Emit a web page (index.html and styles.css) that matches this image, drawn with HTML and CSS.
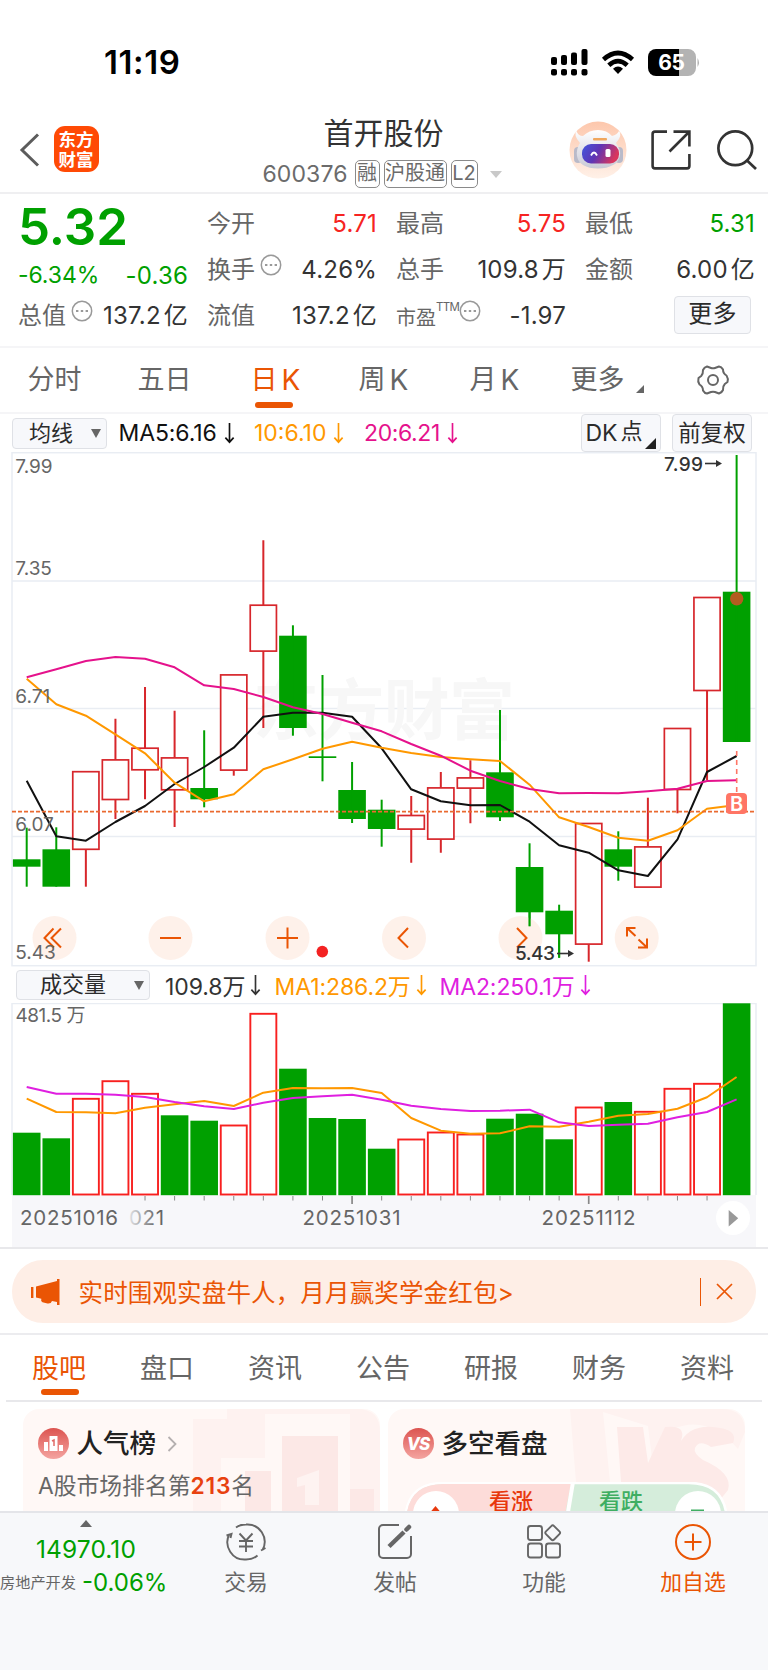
FILE: index.html
```html
<!DOCTYPE html>
<html lang="zh-CN">
<head>
<meta charset="utf-8">
<title>首开股份 600376</title>
<link rel="stylesheet" href="styles.css">
</head>
<body>
<div class="phone">
  <header class="status">
    <span class="clock">11:19</span>
    <svg class="status-icons" width="150" height="28" viewBox="551 49 150 28">
      <g fill="#000">
        <rect x="551" y="57" width="6" height="8" rx="2"/><rect x="561" y="55" width="6" height="10" rx="2"/><rect x="571" y="52.500" width="6" height="12.500" rx="2"/><rect x="581.500" y="49" width="6" height="16" rx="2"/>
        <rect x="551" y="69" width="6" height="6.500" rx="2"/><rect x="561" y="69" width="6" height="6.500" rx="2"/><rect x="571" y="69" width="6" height="6.500" rx="2"/><rect x="581.500" y="69" width="6" height="6.500" rx="2"/>
      </g>
      <g fill="none" stroke="#000" stroke-width="4.600"><path d="M603.500 59.500Q618 46.500 632.500 59.500"/><path d="M608.800 65.300Q618 57 627.200 65.300"/></g>
      <path d="M613 68.700Q618 64.500 623 68.700L618 74Z"/>
      <path d="M656 49h23v27h-23a8 8 0 0 1-8-8V57a8 8 0 0 1 8-8z"/>
      <path fill="#b3b3b3" d="M679 49h9a8 8 0 0 1 8 8v11a8 8 0 0 1-8 8h-9zM697.500 58q3 4.500 0 9z"/>
      <text class="battery" x="671.500" y="70" text-anchor="middle">65</text>
    </svg>
  </header>

  <nav class="topbar">
    <svg class="back" width="22" height="36" viewBox="0 0 22 36"><path d="M19 2.500L3 18l16 15.500" fill="none" stroke="#5c5c5c" stroke-width="3"/></svg>
    <div class="logo"><span>东方</span><span>财富</span></div>
    <div class="title">
      <h1>首开股份</h1>
      <div class="code"><span class="num">600376</span><i class="tag">融</i><i class="tag w3">沪股通</i><i class="tag l2">L2</i><b class="caret"></b></div>
    </div>
    <svg class="robot" width="58" height="58" viewBox="0 0 58 58">
      <defs><linearGradient id="rb" x1="0" y1="0" x2="0" y2="1"><stop offset="0" stop-color="#fdc7ac"/><stop offset="1" stop-color="#fff1e8"/></linearGradient>
      <linearGradient id="rv" x1="0" y1="0" x2="1" y2=".3"><stop offset="0" stop-color="#4257dd"/><stop offset=".5" stop-color="#5f35b4"/><stop offset="1" stop-color="#d8365e"/></linearGradient>
      <linearGradient id="rh" x1="0" y1="0" x2="0" y2="1"><stop offset="0" stop-color="#fff"/><stop offset="1" stop-color="#c9cad6"/></linearGradient></defs>
      <circle cx="29" cy="29" r="28.500" fill="url(#rb)"/>
      <rect x="5" y="26" width="8" height="16" rx="4" fill="#b9bac9"/><rect x="46" y="26" width="8" height="16" rx="4" fill="#b9bac9"/>
      <path d="M11 22Q4 14 7.500 10Q9 15 14 15Q20 9 29 9Q38 9 43 15Q48 14 50 10Q54 14 47 22Q52 29 51 35Q49 42 44 44Q38 47.500 29 47.500Q20 47.500 14 44Q9 41 8 35Q7 28 11 22Z" fill="url(#rh)"/>
      <rect x="24" y="17" width="14" height="2.600" rx="1" fill="#f0a75e"/>
      <rect x="13" y="23" width="37" height="19.500" rx="9" fill="url(#rv)"/>
      <path d="M22 34.500q3-6 6 0" stroke="#fff" stroke-width="1.800" fill="none"/><rect x="36.500" y="28" width="5" height="8" rx="1.500" fill="#fff"/>
    </svg>
    <svg class="share" width="40" height="40" viewBox="0 0 40 40" fill="none" stroke="#333" stroke-width="2.600"><path d="M16 1.600H4a2.400 2.400 0 0 0-2.400 2.400v32A2.400 2.400 0 0 0 4 38.400h32a2.400 2.400 0 0 0 2.400-2.400V24"/><path d="M22.500 1.600H38.400V16.500M38 2L18.500 21.500"/></svg>
    <svg class="search" width="41" height="41" viewBox="0 0 41 41" fill="none" stroke="#333" stroke-width="2.700"><circle cx="18.300" cy="18.300" r="16.900"/><path d="M29.500 30l9.500 9"/></svg>
  </nav>

  <section class="quote">
    <div class="col first">
      <div class="price">5.32</div>
      <div class="row change"><span class="pct">-6.34%</span><span class="g">-0.36</span></div>
      <div class="row"><span class="lab">总值<svg class="dots" width="22" height="22" viewBox="0 0 22 22"><circle cx="11" cy="11" r="9.700"/><path d="M5 11h2.400m2.400 0h2.400m2.400 0H17"/></svg></span><span>137.2<em>亿</em></span></div>
    </div>
    <div class="col">
      <div class="row"><span class="lab">今开</span><span class="r">5.71</span></div>
      <div class="row"><span class="lab">换手<svg class="dots" width="22" height="22" viewBox="0 0 22 22"><circle cx="11" cy="11" r="9.700"/><path d="M5 11h2.400m2.400 0h2.400m2.400 0H17"/></svg></span><span>4.26%</span></div>
      <div class="row"><span class="lab">流值</span><span>137.2<em>亿</em></span></div>
    </div>
    <div class="col">
      <div class="row"><span class="lab">最高</span><span class="r">5.75</span></div>
      <div class="row"><span class="lab">总手</span><span>109.8<em>万</em></span></div>
      <div class="row pe"><span class="lab small">市盈<sup>TTM</sup><svg class="dots" width="22" height="22" viewBox="0 0 22 22"><circle cx="11" cy="11" r="9.700"/><path d="M5 11h2.400m2.400 0h2.400m2.400 0H17"/></svg></span><span>-1.97</span></div>
    </div>
    <div class="col">
      <div class="row"><span class="lab">最低</span><span class="g">5.31</span></div>
      <div class="row"><span class="lab">金额</span><span>6.00<em>亿</em></span></div>
      <div class="row end"><span class="btn more">更多</span></div>
    </div>
  </section>

  <nav class="periods">
    <span>分时</span><span>五日</span><span class="on">日<i>K</i></span><span>周<i>K</i></span><span>月<i>K</i></span><span>更多<b class="corner"></b></span>
    <svg width="34" height="34" viewBox="-17 -17 34 34" fill="none" stroke="#666" stroke-width="2"><path stroke-linejoin="round" d="M-6-13.500L-2-12Q0-11.300 2-12L6-13.500Q8.500-13.300 10-10.500Q10-6.500 13.500-4.500Q15.500-1.500 14.500 2L11.800 4Q9.800 6 10 10Q8.800 12.700 6 13.500L2 12Q0 11.300-2 12L-6 13.500Q-8.500 13.300-10 10.500Q-10 6.500-13.500 4.500Q-15.500 1.500-14.500-2L-11.800-4Q-9.800-6-10-10Q-8.800-12.700-6-13.500Z"/><circle r="5"/></svg>
  </nav>

  <div class="mabar">
    <span class="btn sel">均线<b class="down"></b></span>
    <span class="ma m5">MA5:6.16<svg class="arr" viewBox="0 0 12 24"><path d="M6 1v21M1.500 17L6 22l4.500-5"/></svg></span>
    <span class="ma m10">10:6.10<svg class="arr" viewBox="0 0 12 24"><path d="M6 1v21M1.500 17L6 22l4.500-5"/></svg></span>
    <span class="ma m20">20:6.21<svg class="arr" viewBox="0 0 12 24"><path d="M6 1v21M1.500 17L6 22l4.500-5"/></svg></span>
    <span class="btn dk">DK<em>点</em><b class="corner"></b></span>
    <span class="btn adj">前复权</span>
  </div>

  <svg class="kline" id="kline" width="768" height="515" viewBox="0 452 768 515"></svg>

  <div class="volbar">
    <span class="btn sel vol">成交量<b class="down"></b></span>
    <span class="ma v0">109.8万<svg class="arr" viewBox="0 0 12 24"><path d="M6 1v21M1.500 17L6 22l4.500-5"/></svg></span>
    <span class="ma v1">MA1:286.2万<svg class="arr" viewBox="0 0 12 24"><path d="M6 1v21M1.500 17L6 22l4.500-5"/></svg></span>
    <span class="ma v2">MA2:250.1万<svg class="arr" viewBox="0 0 12 24"><path d="M6 1v21M1.500 17L6 22l4.500-5"/></svg></span>
  </div>

  <svg class="volume" id="volume" width="768" height="246" viewBox="0 1003 768 246"></svg>

  <section class="promo">
    <div class="banner">
      <svg width="29" height="26" viewBox="0 0 29 26" fill="#ea5504"><rect x="0" y="8" width="2.400" height="11"/><path d="M5 7.500L26 2V0h2.500v26H26v-3l-5-1q-1 3-4.500 2.500l-5-1.300q-2-1-1.200-3.500L5 18.500z"/></svg>
      <span class="msg">实时围观实盘牛人，月月赢奖学金红包&gt;</span>
      <i class="bar"></i>
      <svg width="17" height="17" viewBox="0 0 17 17"><path d="M1 1l15 15M16 1L1 16" stroke="#ea5504" stroke-width="1.700"/></svg>
    </div>
  </section>

  <nav class="tabs"><span class="on">股吧</span><span>盘口</span><span>资讯</span><span>公告</span><span>研报</span><span>财务</span><span>资料</span></nav>

  <section class="cards">
    <article class="card">
      <svg class="deco" width="357" height="102" viewBox="0 0 357 102"><path fill="#fef2f0" d="M170 10h34V0h130q23 0 23 23v79h-30V80V5h-85v44h-44v53h-28z"/><path fill="#fce8e6" d="M222 62h26v40h-26zM259 27h56v75h-56zM327 80h24v22h-24z"/><path fill="#fef3f1" d="M274 69l22-8v35h-14V76l-8 2z"/></svg>
      <div class="head">
        <svg width="31" height="31" viewBox="0 0 31 31"><defs><linearGradient id="ic" x1="0" y1="0" x2="0" y2="1"><stop stop-color="#dc5450"/><stop offset="1" stop-color="#f4a4a0"/></linearGradient></defs><circle cx="15.500" cy="15.500" r="15.500" fill="url(#ic)"/><path fill="#fff" d="M6 14h4v9H6zM11.500 8h8v15h-8zM21 17h4v6h-4z"/><path d="M14 13l2-1v6" fill="none" stroke="#e06a66" stroke-width="1.500"/></svg>
        <h2>人气榜</h2>
        <svg class="chev" width="10" height="16" viewBox="0 0 10 16"><path d="M1.500 1L8.500 8l-7 7" fill="none" stroke="#b5b0b0" stroke-width="1.800"/></svg>
      </div>
      <p class="rank">A股市场排名第<b>213</b>名</p>
    </article>
    <article class="card">
      <svg class="deco" width="357" height="102" viewBox="0 0 357 102"><path fill="#fef2f0" d="M182 0h152q23 0 23 23L350 40Q320 5 285 20L265 58 260 17 215 3 222 73H188z"/><path fill="#fdeae8" d="M229 18h26l5 36 17-36q25-3 14 18Q300 16 325 18q26 2 20 16l-22 4q-12-8-16 1-2 5 8 12 30 13 25 30L328 96Q325 80 308 73H233z"/></svg>
      <div class="head">
        <svg width="31" height="31" viewBox="0 0 31 31"><circle cx="15.500" cy="15.500" r="15.500" fill="url(#ic)"/><text class="vs" x="15" y="22" text-anchor="middle">VS</text></svg>
        <h2>多空看盘</h2>
      </div>
      <svg class="vote" width="326" height="36" viewBox="404 1482 326 36">
        <path d="M405 1524q0-41 38-41h246q38 0 38 41z" fill="#d5eddb" stroke="#fff" stroke-width="2.500"/>
        <path d="M406 1524q0-40 37-40h128l-8 40z" fill="#fddcd9"/><path d="M573 1482l-6 36" stroke="#fff" stroke-width="4"/>
        <circle cx="436" cy="1514" r="23" fill="#fff"/><circle cx="698" cy="1514" r="23" fill="#fff"/>
        <path d="M435.500 1506l5 6h-10z" fill="#e8380d"/><rect x="691" y="1509.500" width="13" height="3" fill="#3fae62"/>
        <text class="votetxt" x="489" y="1508.500" fill="#e8380d">看涨</text><text class="votetxt" x="599" y="1508.500" fill="#3fae62">看跌</text>
      </svg>
    </article>
  </section>

  <footer class="dock">
    <div class="index"><b class="up"></b><span class="pt">14970.10</span><span class="sec"><small>房地产开发</small>-0.06%</span></div>
    <div class="item"><svg width="42" height="38" viewBox="0 0 42 38" fill="none" stroke="#666" stroke-width="1.900"><path d="M11 4.500Q15 1.500 21 1.500A17.300 17.300 0 0 1 37.500 27M1.500 12.500l5-1.500-1 4M32.500 32.500Q28 36.500 21 36.500A17.300 17.300 0 0 1 4.500 11M36 27.500l4.500-2.500"/><path d="M14.500 10.500l6.500 7 6.500-7M21 17.500V29M14 18h14M14 23.500h14"/></svg><span>交易</span></div>
    <div class="item"><svg width="36" height="38" viewBox="0 0 36 38" fill="none" stroke="#666" stroke-width="2"><path d="M22 2H6a4 4 0 0 0-4 4v25a4 4 0 0 0 4 4h24a4 4 0 0 0 4-4V13"/><path d="M12 23.500L27 9" stroke-width="4.500"/><path d="M29.500 6.500l2.500-2.500" stroke-width="4.500" stroke-linecap="round"/></svg><span>发帖</span></div>
    <div class="item"><svg width="36" height="38" viewBox="0 0 36 38" fill="none" stroke="#666" stroke-width="1.900"><rect x="2" y="3" width="14" height="14" rx="2.500"/><rect x="2" y="20.500" width="14" height="14" rx="2.500"/><rect x="20" y="20.500" width="14" height="14" rx="2.500"/><rect x="21" y="4" width="11.500" height="11.500" rx="2" transform="rotate(45 26.700 9.700)"/></svg><span>功能</span></div>
    <div class="item add"><svg width="38" height="38" viewBox="0 0 38 38" fill="none" stroke="#ea5504" stroke-width="2"><circle cx="19" cy="19" r="17"/><path d="M19 10.500v17M10.500 19h17"/></svg><span>加自选</span></div>
  </footer>
</div>
<script src="chart.js"></script>
</body>
</html>
```

FILE: styles.css
```css
* { box-sizing: border-box; margin: 0; padding: 0; }
body { width: 768px; background: #fff; font-family: Inter, "Noto Sans CJK SC", sans-serif; color: #333; }
i, em { font-style: normal; }
svg { display: block; flex: none; }
.phone { width: 768px; height: 1670px; overflow: hidden; display: flex; flex-direction: column; }
.phone > * { flex: none; }

.status { height: 110px; display: flex; justify-content: space-between; align-items: flex-start; padding: 49px 67px 0 104px; }
.clock { font-size: 33px; line-height: 27px; font-weight: 600; color: #000; letter-spacing: .6px; }
.battery { font-size: 21px; font-weight: 700; fill: #fff; letter-spacing: -.3px; }

.topbar { height: 84px; border-bottom: 2px solid #efeff1; display: flex; align-items: flex-start; padding: 9px 10px 0 19px; }
.back { margin-top: 13px; }
.logo { width: 46px; height: 46px; margin: 7px 0 0 12.500px; border-radius: 11px; background: #ff4a05; color: #fff; font-size: 17.500px; font-weight: 600; line-height: 19.500px; text-align: center; padding-top: 4px; }
.logo span { display: block; }
.title { width: 300px; margin-left: 134.500px; text-align: center; }
h1 { font-size: 30px; line-height: 32px; font-weight: 400; width: 300px; margin: -2px 0 0 .5px; }
.code { display: flex; align-items: center; height: 28px; margin-top: 11px; margin-left: 29.500px; color: #6b6b6b; }
.num { font-size: 23px; width: 92px; text-align: left; letter-spacing: .1px; }
.tag { height: 28px; width: 25px; border: 1.500px solid #8a8a8a; border-radius: 5px; font-size: 20px; line-height: 25px; text-align: center; margin-right: 4px; display: flex; justify-content: center; }
.w3 { width: 63px; }
.l2 { width: 27px; }
.caret { border: 6.500px solid transparent; border-top: 7px solid #c9c9c9; border-bottom: 0; margin-left: 8px; }
.robot { margin: 2px 0 0 36px; }
.share { margin: 11px 0 0 24px; }
.search { margin: 11px 0 0 26px; }

.quote { height: 154px; border-bottom: 2px solid #f5f5f7; display: grid; grid-template-columns: repeat(4, 170px); column-gap: 19px; padding: 7px 0 0 18px; }
.row { height: 46px; display: flex; justify-content: space-between; align-items: center; font-size: 24px; line-height: 46px; white-space: nowrap; letter-spacing: .2px; }
.row em { margin-left: 3px; font-size: 24px; }
.lab { color: #666; display: flex; align-items: center; font-size: 24px; letter-spacing: 0; }
.dots { margin: -11px 0 0 5px; fill: none; stroke: #999; stroke-width: 1.500; }
.dots path { stroke-width: 2.200; }
.small { font-size: 20px; padding-top: 4px; }
sup { font-size: 11.500px; line-height: 12px; margin-top: -22px; letter-spacing: -.7px; }
.small .dots { margin: -14px 0 0 0; }
.price { height: 52px; font-size: 51px; line-height: 52px; font-weight: 600; color: #00a000; letter-spacing: 0; }
.change { height: 40px; color: #00a000; }
.change .g { margin-top: 6px; }
.pct { font-size: 23px; margin-top: 4px; letter-spacing: -.1px; }
.r { color: #f62422; } .g { color: #00a000; }
.end { justify-content: flex-end; padding-right: 4px; }
.btn { background: #f7f8fb; border: 1.500px solid #dfe1e6; border-radius: 4px; color: #2b2b2b; display: flex; align-items: center; justify-content: center; position: relative; }
.more { width: 77px; height: 38px; font-size: 24px; line-height: 32px; padding-bottom: 3px; margin-bottom: 2px; }

.periods { height: 66px; border-bottom: 2px solid #f5f5f7; display: grid; grid-template-columns: 110px 113px 108px 111px 101px 125px 34px; align-items: center; justify-items: start; padding-left: 27.500px; font-size: 27px; color: #666; }
.periods span { position: relative; display: flex; align-items: center; line-height: 64px; }
.periods i { margin-left: 4px; font-size: 28px; }
.periods .on, .tabs .on { color: #ea5504; }
.on::after { content: ""; position: absolute; height: 6px; width: 38px; border-radius: 3px; background: #ea5504; left: 50%; margin-left: -20px; bottom: 4px; }
.corner { border-left: 8px solid transparent; border-bottom: 8px solid #666; margin: 18px 0 0 11px; }

.mabar { height: 38px; display: flex; align-items: center; padding-left: 12px; }
.sel { width: 95px; height: 31px; font-size: 22px; line-height: 26px; justify-content: flex-start; padding: 0 0 1px 16px; }
.down { border: 5px solid transparent; border-top: 9px solid #666; border-bottom: 0; position: absolute; right: 5px; top: 10px; }
.ma { font-size: 23px; display: flex; align-items: center; white-space: nowrap; }
.arr { width: 11px; height: 22px; margin-left: 7px; fill: none; stroke: currentColor; stroke-width: 1.800; }
.m5 { color: #111; width: 135.500px; margin-left: 11.500px; letter-spacing: -.1px; }
.m10 { color: #ff9800; width: 110px; letter-spacing: 0; }
.m20 { color: #e5128c; width: 216.500px; letter-spacing: -.4px; }
.dk { width: 80px; height: 38px; font-size: 23px; justify-content: flex-start; padding-left: 4px; }
.dk em { font-size: 22px; line-height: 28px; margin: -4px 0 0 3px; }
.dk .corner { border-left-width: 11px; border-bottom: 11px solid #222; position: absolute; right: 4px; bottom: 2px; margin: 0; }
.adj { width: 80px; height: 38px; margin-left: 11.500px; font-size: 22.500px; line-height: 32px; padding: 0 0 1px 0; }

.volbar { height: 36px; display: flex; align-items: center; padding: 0 0 1px 16px; }
.vol { width: 134px; height: 30px; padding-left: 23px; }
.v0 { margin-left: 15px; width: 109.500px; } .v1 { color: #ff9800; width: 165px; } .v2 { color: #df1fe0; }
.volbar .ma { letter-spacing: -.1px; }
.volbar .arr { margin-left: 5px; }

.grid { stroke: #e9edf3; stroke-width: 1.500; fill: none; }
.mark { font-size: 66px; font-weight: 700; fill: #f7f7f7; }
.ylab { font-size: 19px; fill: #666; }
.peak { font-size: 19px; font-weight: 500; fill: #333; }
.date { font-size: 20.500px; fill: #666; }

.promo { border-top: 2px solid #e8e8eb; border-bottom: 2px solid #ececef; height: 88px; padding: 11px 12px 0; margin-top: -2px; }
.banner { height: 63px; border-radius: 31px; background: #feeee6; display: flex; align-items: center; padding: 0 23px 0 19px; color: #ea5504; }
.msg { font-size: 24.500px; letter-spacing: .15px; margin-left: 18.500px; padding-bottom: 1px; flex: 1; white-space: nowrap; }
.bar { width: 1.500px; height: 28px; background: #ea5504; margin-right: 15px; }

.tabs { height: 67px; margin: 0 6px; border-bottom: 2px solid #e8e8eb; display: flex; justify-content: space-between; padding: 0 28px 0 26px; font-size: 27px; line-height: 68px; color: #666; }
.tabs span { position: relative; }
.tabs .on::after { bottom: 5px; margin-left: -18px; }

.cards { height: 109px; display: flex; gap: 8px; padding: 7px 0 0 23px; overflow: hidden; }
.card { width: 357px; height: 130px; border-radius: 16px 16px 0 0; background: #fff8f6; position: relative; overflow: hidden; }
.deco { position: absolute; left: 0; top: 0; }
.head { display: flex; align-items: center; height: 69px; padding-left: 15px; position: relative; }
h2 { font-size: 26.500px; font-weight: 500; color: #222; margin-left: 7.500px; line-height: 69px; }
.chev { margin-left: 11px; }
.rank { position: relative; font-size: 22.800px; line-height: 22px; color: #666; padding-left: 15px; margin-top: -3px; white-space: nowrap; }
.rank b { color: #e8410f; font-weight: 600; letter-spacing: .8px; }
.vs { font-size: 17px; font-weight: 800; font-style: italic; fill: #fff; letter-spacing: -1px; }
.vote { position: absolute; left: 16px; top: 73px; }
.votetxt { font-size: 22px; font-weight: 500; }

.dock { height: 160px; border-top: 2px solid #e4e5e9; background: #f7f8fa; display: grid; grid-template-columns: 172px 148px 150px 148px 150px; color: #666; }
.index { color: #00a000; display: flex; flex-direction: column; align-items: center; font-size: 24.500px; }
.up { border: 6.500px solid transparent; border-bottom: 7px solid #666; border-top: 0; margin-top: 7px; }
.pt { line-height: 28px; margin-top: 8px; letter-spacing: .1px; }
.sec { display: flex; align-items: center; line-height: 30px; margin-top: 5px; white-space: nowrap; align-self: flex-start; font-size: 24px; }
.sec small { font-size: 15.200px; color: #666; margin-right: 6px; }
.item { display: flex; flex-direction: column; align-items: center; padding-top: 10px; font-size: 21.800px; }
.item span { line-height: 30px; margin-top: 6px; }
.add { color: #ea5504; }
```

FILE: chart.js
```js
const xs = i => 26.7 + 29.58 * i;
const line = (ys, color) => `<polyline fill="none" stroke="${color}" stroke-width="2" stroke-linejoin="round" points="${ys.map((y, i) => xs(i).toFixed(1) + ',' + y).join(' ')}"/>`;
const UP = '#d7262b', DOWN = '#00a000';

// direction, body top, body bottom, high, low
const candles = [
  ['g',859.3,866.7,827.7,886.7],['g',849.3,886.7,827.3,886.7],['r',771.5,849.5,771.5,886.7],['r',759.7,799.7,718.7,819],
  ['r',748,770,687,799.3],['r',757.7,790,710.7,827],['g',788,799.3,730.3,807.3],['r',674.7,770.3,674.7,775.7],
  ['r',605,651.3,540.3,728],['g',635.7,728,625.3,735.7],['g',756.3,758,675,781.3],['g',790,819,762,823],
  ['g',809.7,829,799.7,846.7],['r',815.3,829.3,796,862.7],['r',787.7,839.3,772,852.7],['r',777.7,788.3,760.3,823.3],
  ['g',772.3,817.3,710,821],['g',867,912.3,843.3,926.3],['g',910.7,934.3,904.7,957.7],['r',823.3,944.3,823.3,961.7],
  ['g',849.3,866.7,831.3,880.7],['r',846.7,887.3,797.7,887.3],['r',728.3,789.7,728.3,813.3],['r',597.3,690.7,597.3,780],
  ['g',591.7,742,455,742]
];
const ma5 = [780.7,836.3,840.7,822,806,784,767,747.7,716.7,712.7,712.7,716.7,748.3,789.3,801.3,805.3,805,821.7,845.3,852.7,870.3,876,839.3,772,756];
const ma10 = [678.7,704.3,715.7,734.3,753.3,782.7,801.3,794.3,769.3,759.3,748.7,741.7,747.7,753,757,759.3,761,784.7,817.3,827,837.7,840.7,830.3,808.7,805];
const ma20 = [677.3,669.3,661,657,658.7,667.3,685.3,689,697,707.3,714,722.7,731.3,744,755.7,770.7,781,789,793.3,793,793.3,791.3,788.7,781,780.3];

let k = `<rect class="grid" x="12" y="452.7" width="744" height="513"/><path class="grid" d="M12 581H756M12 708.5H756M12 836.5H756"/>
<text class="mark" x="253" y="734" textLength="262">东方财富</text>`;
candles.forEach(([d, t, b, h, l], i) => {
  const x = xs(i);
  if (d === 'g') k += `<rect x="${x - 13.8}" y="${t}" width="27.6" height="${b - t}" fill="${DOWN}"/><path d="M${x} ${h}V${l}" stroke="${DOWN}" stroke-width="2"/>`;
  else k += `<rect x="${x - 13.1}" y="${t + .2}" width="26.2" height="${b - t - .4}" fill="#fff" stroke="${UP}" stroke-width="1.7"/><path d="M${x} ${h}V${t}M${x} ${b}V${l}" stroke="${UP}" stroke-width="2"/>`;
});
k += line(ma5, '#111') + line(ma10, '#ff9800') + line(ma20, '#e5128c');
k += `<path d="M12 811.7H756" stroke="#ea6a30" stroke-width="1.8" stroke-dasharray="4 2"/>
<circle cx="736.7" cy="598.7" r="6.7" fill="#b35c20"/>
<path d="M736.7 751V793" stroke="#ff7565" stroke-width="1.6" stroke-dasharray="5 4"/>
<rect x="726" y="793" width="21" height="21" rx="4" fill="#ff7565"/>
<text x="736.7" y="810.5" text-anchor="middle" font-size="20" font-weight="600" fill="#fff">B</text>
<circle cx="322.3" cy="951.6" r="5.8" fill="#f32222"/>`;
const icons = [
  [54.5, 'M53.5 928.5L44.500 938l9.500 9.500M61 928.500L51.500 938l9.500 9.500'], [170.500, 'M160 938h21'], [287.500, 'M277 938h21M287.500 927.500v21'],
  [404, 'M408 928L398.500 938l9.500 9.500'], [520.500, 'M517 928l9.500 10-9.500 9.500'],
  [636.700, 'M635.500 928h-8.500v8.500M627.500 928.500l8 7.500M638 947.500h9v-9M646.500 947l-8-7.500']
];
icons.forEach(([cx, d]) => k += `<circle cx="${cx}" cy="938" r="22" fill="#fde7dc" fill-opacity=".6"/><path d="${d}" fill="none" stroke="#ea5504" stroke-width="2"/>`);
[['7.99',473],['7.35',575],['6.71',702.5],['6.07',831],['5.43',959]].forEach(([t, y]) => k += `<text class="ylab" x="15.3" y="${y}">${t}</text>`);
// wicks that reach below the round buttons' top edge stay in front of them
k += `<path d="M${xs(17)} 912V926.300M${xs(18)} 934V957.700" stroke="${DOWN}" stroke-width="2"/>`;
k += `<text class="peak" x="664" y="470.5" textLength="39">7.99</text><path d="M705 463.500h11" stroke="#333" stroke-width="1.6"/><path d="M716 460l6 3.500-6 3.500z" fill="#333"/>
<text class="peak" x="515" y="960" textLength="40">5.43</text><path d="M557 953.500h11" stroke="#333" stroke-width="1.6"/><path d="M568 950l6 3.500-6 3.500z" fill="#333"/>`;
document.getElementById('kline').innerHTML = k;

const dirs = 'ggrrrggrrggggrrrgggrgrrrg';
const tops = [1132.7,1138.3,1098.3,1080.7,1093.3,1115.3,1120.7,1125,1013.3,1068.7,1118,1119,1148.7,1139,1132,1134,1118.7,1113.7,1139.3,1107,1102,1111.3,1088.3,1083.3,1003.3];
const v1 = [1098.7,1112,1112.3,1113.3,1107.7,1104.3,1101,1106,1092.7,1088,1088.3,1088,1093,1118,1130.7,1133.7,1133.3,1126.3,1126.7,1121.7,1115.7,1114,1108.7,1097.3,1077];
const v2 = [1087,1093.7,1093.7,1094.7,1097,1102,1106.3,1109,1102.7,1098,1096.3,1094.7,1099.7,1105.7,1109,1111,1110.7,1109.7,1122.3,1126,1124.7,1123.7,1117.3,1112,1099.3];
let v = `<defs><linearGradient id="fade"><stop stop-color="#666" stop-opacity=".15"/><stop offset=".8" stop-color="#666"/></linearGradient></defs>
<rect x="12" y="1195" width="744" height="54" fill="#f7f7fa"/><path class="grid" d="M12 1195V1003.5H756V1195"/><text class="ylab" x="15.500" y="1022.3" textLength="70">481.5 万</text>`;
tops.forEach((t, i) => {
  const x = xs(i);
  v += dirs[i] === 'g' ? `<rect x="${x - 13.8}" y="${t}" width="27.6" height="${1195.200 - t}" fill="${DOWN}"/>`
    : `<rect x="${x - 13}" y="${t + .5}" width="26" height="${1194 - t}" fill="#fff" stroke="#f8201f" stroke-width="1.9"/>`;
  if (i > 3 && i < 24) v += `<path d="M${x} 1196V${i === 11 || i === 19 ? 1204 : 1200.500}" stroke="#888" stroke-width="${i === 11 || i === 19 ? 1.700 : 1}"/>`;
});
v += line(v1, '#ff9800') + line(v2, '#df1fe0');
v += `<text class="date" x="20" y="1225.300" textLength="98">20251016</text><text class="date" x="129" y="1225.300" textLength="35" style="fill:url(#fade)">021</text>
<text class="date" x="302.500" y="1225.300" textLength="98">20251031</text><text class="date" x="541.500" y="1225.300" textLength="94">20251112</text>
<circle cx="733" cy="1218" r="17" fill="#fff"/><path d="M728.700 1210v16.500l9.500-8.200z" fill="#999"/>`;
document.getElementById('volume').innerHTML = v;
```
